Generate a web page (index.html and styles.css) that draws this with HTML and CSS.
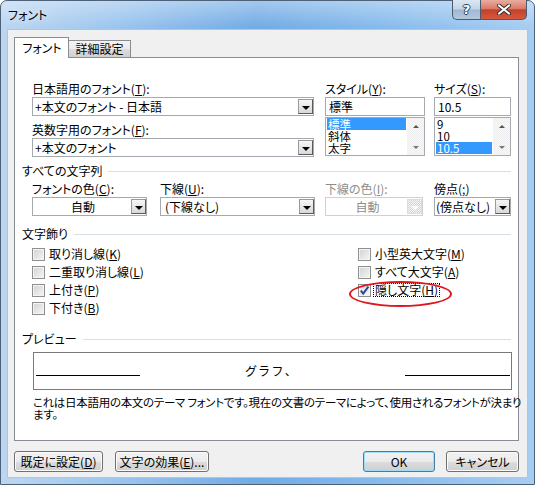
FILE: index.html
```html
<!DOCTYPE html>
<html lang="ja">
<head>
<meta charset="utf-8">
<title>フォント</title>
<link rel="stylesheet" href="styles.css">
</head>
<body>
<div class="window">
  <div class="titlebar">
    <span class="title">フォント</span>
    <div class="controls">
      <span class="btn-help">?</span>
      <span class="btn-close"><svg width="16" height="11" viewBox="0 0 16 11"><path d="M3 1.5 L13 9.5 M13 1.5 L3 9.5" stroke="#3a2a28" stroke-width="4" stroke-linecap="round"/><path d="M3 1.5 L13 9.5 M13 1.5 L3 9.5" stroke="#fff" stroke-width="2.2" stroke-linecap="round"/></svg></span>
    </div>
  </div>
  <div class="client">
    <div class="tabs">
      <span class="tab active">フォント</span>
      <span class="tab">詳細設定</span>
    </div>
    <div class="panel">
      <div class="top-grid indent">
        <div class="field">
          <div class="label">日本語用のフォント(<u>T</u>):</div>
          <div class="combo"><span class="combo-text">+本文のフォント - 日本語</span><span class="drop"></span></div>
          <div class="label gap-6">英数字用のフォント(<u>F</u>):</div>
          <div class="combo"><span class="combo-text">+本文のフォント</span><span class="drop"></span></div>
        </div>
        <div class="field">
          <div class="label">スタイル(<u>Y</u>):</div>
          <div class="textbox">標準</div>
          <div class="list">
            <div class="list-items">
              <div class="item sel">標準</div>
              <div class="item">斜体</div>
              <div class="item">太字</div>
            </div>
            <div class="scroll"><span class="arr up"></span><span class="arr down"></span></div>
          </div>
        </div>
        <div class="field">
          <div class="label">サイズ(<u>S</u>):</div>
          <div class="textbox">10.5</div>
          <div class="list">
            <div class="list-items">
              <div class="item">9</div>
              <div class="item">10</div>
              <div class="item sel">10.5</div>
            </div>
            <div class="scroll"><span class="arr up"></span><span class="arr down"></span></div>
          </div>
        </div>
      </div>

      <div class="group-head h1"><span>すべての文字列</span><i class="rule"></i></div>
      <div class="row-grid indent">
        <div class="field">
          <div class="label">フォントの色(<u>C</u>):</div>
          <div class="combo w-color"><span class="combo-text center">自動</span><span class="drop"></span></div>
        </div>
        <div class="field">
          <div class="label">下線(<u>U</u>):</div>
          <div class="combo w-under"><span class="combo-text pad4">(下線なし)</span><span class="drop"></span></div>
        </div>
        <div class="field">
          <div class="label disabled">下線の色(<u>I</u>):</div>
          <div class="combo w-ucolor off"><span class="combo-text center">自動</span><span class="drop"></span></div>
        </div>
        <div class="field">
          <div class="label">傍点(<u>;</u>)</div>
          <div class="combo w-emph"><span class="combo-text pad2">(傍点なし)</span><span class="drop"></span></div>
        </div>
      </div>

      <div class="group-head h2"><span>文字飾り</span><i class="rule"></i></div>
      <div class="checks indent">
        <div class="check-col left">
          <div class="check"><span class="box"></span><span>取り消し線(<u>K</u>)</span></div>
          <div class="check"><span class="box"></span><span>二重取り消し線(<u>L</u>)</span></div>
          <div class="check"><span class="box"></span><span>上付き(<u>P</u>)</span></div>
          <div class="check"><span class="box"></span><span>下付き(<u>B</u>)</span></div>
        </div>
        <div class="check-col">
          <div class="check"><span class="box"></span><span>小型英大文字(<u>M</u>)</span></div>
          <div class="check"><span class="box"></span><span>すべて大文字(<u>A</u>)</span></div>
          <div class="check marked"><span class="box on"><svg width="11" height="11" viewBox="0 0 11 11"><path d="M1.8 5.6 L4.2 8.6 L9.4 1.6" fill="none" stroke="#2f4a94" stroke-width="2"/></svg></span><span class="focus">隠し文字(<u>H</u>)</span><span class="annot"></span></div>
        </div>
      </div>

      <div class="group-head h3"><span>プレビュー</span><i class="rule"></i></div>
      <div class="preview">
        <i class="pline left"></i>
        <span class="ptext">グラフ、</span>
        <i class="pline right"></i>
      </div>
      <p class="desc">これは日本語用の本文のテーマ フォントです。現在の文書のテーマによって、使用されるフォントが決まり<br>ます。</p>
    </div>

    <div class="footer">
      <div class="btn-group">
        <span class="button w89">既定に設定(<u>D</u>)</span>
        <span class="button w94">文字の効果(<u>E</u>)...</span>
      </div>
      <div class="btn-group g11">
        <span class="button default w72">OK</span>
        <span class="button w73">キャンセル</span>
      </div>
    </div>
  </div>
</div>
</body>
</html>
```

FILE: styles.css
```css
* { box-sizing: border-box; }
html, body { margin: 0; padding: 0; }
body {
  width: 535px;
  height: 485px;
  overflow: hidden;
  background: #fff;
  font-family: "Noto Sans CJK JP", "Noto Sans", sans-serif;
  font-size: 12px;
  line-height: 16px;
  color: #000;
  font-feature-settings: "palt";
}
u { text-decoration: underline; text-underline-offset: 1px; }

.window {
  width: 535px;
  height: 485px;
  border: 1px solid #4d6278;
  border-radius: 7px 7px 0 0;
  background:
    linear-gradient(180deg, rgba(255,255,255,0.35) 0px, rgba(255,255,255,0) 26px),
    linear-gradient(90deg, #bcd6f1 0%, #9cc5ee 22%, #72abe5 48%, #87bbec 72%, #a8cdf2 100%);
  display: flex;
  flex-direction: column;
  padding: 0 6px 6px;
}

/* title bar */
.titlebar {
  height: 28px;
  display: flex;
  justify-content: space-between;
  align-items: flex-start;
  flex: none;
}
.title {
  margin-top: 6px;
  padding-left: 1px;
  text-shadow: 0 0 6px rgba(255,255,255,0.9);
}
.controls {
  display: flex;
  margin-top: -1px;
  margin-right: 1px;
  height: 20px;
}
.btn-help, .btn-close {
  display: flex;
  align-items: center;
  justify-content: center;
  height: 20px;
  border: 1px solid #4a5b70;
  border-top: none;
}
.btn-help {
  width: 28px;
  border-right: none;
  border-radius: 0 0 0 5px;
  background: linear-gradient(180deg, #dbe6f1 0%, #c3d4e6 48%, #9fb8d2 52%, #b3c8dd 100%);
  color: #fff;
  font-family: "DejaVu Sans", sans-serif;
  font-weight: bold;
  font-size: 13px;
  text-shadow: 1px 0 #2e3c4e, -1px 0 #2e3c4e, 0 1px #2e3c4e, 0 -1px #2e3c4e;
}
.btn-close {
  width: 47px;
  border-radius: 0 0 5px 0;
  background: linear-gradient(180deg, #e9ad9f 0%, #d97c66 45%, #c5402a 52%, #d5583f 100%);
}

/* client */
.client {
  flex: 1;
  background: #f0f0f0;
  border: 1px solid #b0c6dc;
  padding: 7px 8px 0 6px;
  display: flex;
  flex-direction: column;
}
.tabs {
  display: flex;
  align-items: flex-end;
  height: 20px;
  flex: none;
  position: relative;
  z-index: 1;
}
.tab {
  height: 17px;
  width: 62px;
  border: 1px solid #898c95;
  border-bottom: none;
  border-left: none;
  text-align: center;
  line-height: 16px;
  background: linear-gradient(180deg, #f3f3f3 0%, #ebebeb 50%, #dddddd 50%, #d0d0d0 100%);
}
.tab.active {
  width: 55px;
  height: 21px;
  margin-bottom: -1px;
  border-left: 1px solid #898c95;
  background: #fff;
  line-height: 20px;
  padding-left: 1px;
}

.panel {
  height: 384px;
  width: 505px;
  background: #fff;
  border: 1px solid #898c95;
  padding: 23px 7px 0 7px;
  flex: none;
}
.indent { margin-left: 10px; }

.label { height: 16px; white-space: nowrap; }
.label.disabled { color: #8d8d8d; }
.gap-6 { margin-top: 6px; }

.top-grid {
  display: grid;
  grid-template-columns: 293px 109px 77px;
}
.top-grid .field:first-child .combo { width: 282px; }
.top-grid .field:nth-child(2) .textbox,
.top-grid .field:nth-child(2) .list { width: 100px; }
.top-grid .field:nth-child(3) .textbox,
.top-grid .field:nth-child(3) .list { width: 77px; }

.combo {
  height: 19px;
  border: 1px solid #a5a9b0;
  background: #fff;
  display: flex;
  align-items: stretch;
}
.combo-text {
  flex: 1;
  padding-left: 2px;
  line-height: 17px;
  white-space: nowrap;
  overflow: hidden;
}
.combo-text.center { text-align: center; }
.combo-text.pad4 { padding-left: 4px; }
.combo-text.pad2 { padding-left: 1px; }
.drop {
  width: 15px;
  margin: 1px 0 1px 0;
  border: 1px solid #9a9a9a;
  border-right-color: #5a5a5a;
  border-bottom-color: #5a5a5a;
  background: linear-gradient(180deg, #f6f6f6, #d9d9d9);
  display: flex;
  align-items: center;
  justify-content: center;
  padding-top: 2px;
}
.drop::after {
  content: "";
  border-left: 4px solid transparent;
  border-right: 4px solid transparent;
  border-top: 4px solid #000;
}
.combo.off { border-color: #cfd1d4; color: #8d8d8d; }
.combo.off .drop {
  border-color: #dcdcdc;
  background: repeating-conic-gradient(#d4d4d4 0 25%, #f6f6f6 0 50%) 0 0 / 2px 2px;
}
.combo.off .drop::after { border-top-color: #fff; }

.textbox {
  height: 19px;
  border: 1px solid #a5a9b0;
  padding-left: 3px;
  line-height: 17px;
}
.list {
  margin-top: 1px;
  height: 39px;
  border: 1px solid #a5a9b0;
  display: flex;
  background: #fff;
}
.list-items { flex: 1; padding: 0 1px; }
.item { height: 12px; line-height: 12px; padding-left: 1px; font-size: 11.5px; }
.item.sel { background: #3399ff; color: #fff; }
.scroll {
  width: 17px;
  background: repeating-conic-gradient(#ececec 0 25%, #fafafa 0 50%) 0 0 / 2px 2px;
  display: flex;
  flex-direction: column;
  justify-content: space-between;
  align-items: center;
  padding: 7px 0 6px;
}
.arr { width: 0; height: 0; border-left: 3px solid transparent; border-right: 3px solid transparent; }
.arr.up { border-bottom: 3px solid #555; }
.arr.down { border-top: 3px solid #777; }

/* group headings */
.group-head {
  display: flex;
  align-items: center;
  height: 16px;
  white-space: nowrap;
}
.group-head .rule {
  flex: 1;
  height: 1px;
  background: #d5dfe5;
  margin-left: 6px;
}
.h1 { margin-top: 6px; }
.h2 { margin-top: 10px; }
.h3 { margin-top: 14px; }

.row-grid {
  margin-top: 2px;
  display: grid;
  grid-template-columns: 128px 165px 109px 77px;
}
.w-color { width: 115px; }
.w-under { width: 155px; }
.w-ucolor { width: 98px; }
.w-emph { width: 77px; }

/* checkboxes */
.checks {
  margin-top: 3px;
  display: flex;
}
.check-col.left { width: 326px; }
.check {
  height: 18px;
  display: flex;
  align-items: center;
  gap: 4px;
  white-space: nowrap;
  position: relative;
}
.box {
  width: 13px;
  height: 13px;
  border: 1px solid #8e8f8f;
  background: linear-gradient(135deg, #d2d2d2 0%, #f6f6f6 100%);
  box-shadow: inset 0 0 0 1px #f4f4f4;
  display: flex;
  align-items: center;
  justify-content: center;
}
.box.on { background: linear-gradient(135deg, #dadfe8 0%, #f8f8f8 100%); }
.focus {
  outline: 1px dotted #000;
  line-height: 12px;
  padding: 0 1px;
  margin-left: -1px;
}
.annot {
  position: absolute;
  left: -9px;
  top: 0;
  width: 103px;
  height: 26px;
  border: 2px solid #e0161e;
  border-radius: 50%;
}

/* preview */
.preview {
  margin: 5px 0 0 11px;
  width: 479px;
  height: 38px;
  border: 1px solid #7a7a7a;
  display: flex;
  align-items: center;
  padding: 0 1px;
}
.pline { display: block; height: 1px; background: #000; margin-top: 8px; }
.pline.left { width: 104px; margin-left: 1px; }
.pline.right { width: 105px; }
.ptext { flex: 1; text-align: center; letter-spacing: 3px; padding-right: 6px; }
.desc {
  margin: 6px 0 0 11px;
  line-height: 12px;
  font-size: 11.5px;
  white-space: nowrap;
  letter-spacing: -0.3px;
}

/* footer buttons */
.footer {
  margin-top: 10px;
  width: 505px;
  display: flex;
  justify-content: space-between;
}
.btn-group { display: flex; gap: 12px; }
.btn-group.g11 { gap: 11px; }
.button {
  height: 21px;
  border: 1px solid #707070;
  border-radius: 3px;
  background: linear-gradient(180deg, #f2f2f2 0%, #ebebeb 50%, #dddddd 50%, #cfcfcf 100%);
  box-shadow: inset 0 0 0 1px #fbfbfb;
  text-align: center;
  line-height: 19px;
  white-space: nowrap;
}
.button.default {
  border-color: #3c7fb1;
  box-shadow: inset 0 0 0 1px #9fdcf8;
}
.w89 { width: 89px; }
.w94 { width: 94px; }
.w72 { width: 72px; }
.w73 { width: 73px; }
```
